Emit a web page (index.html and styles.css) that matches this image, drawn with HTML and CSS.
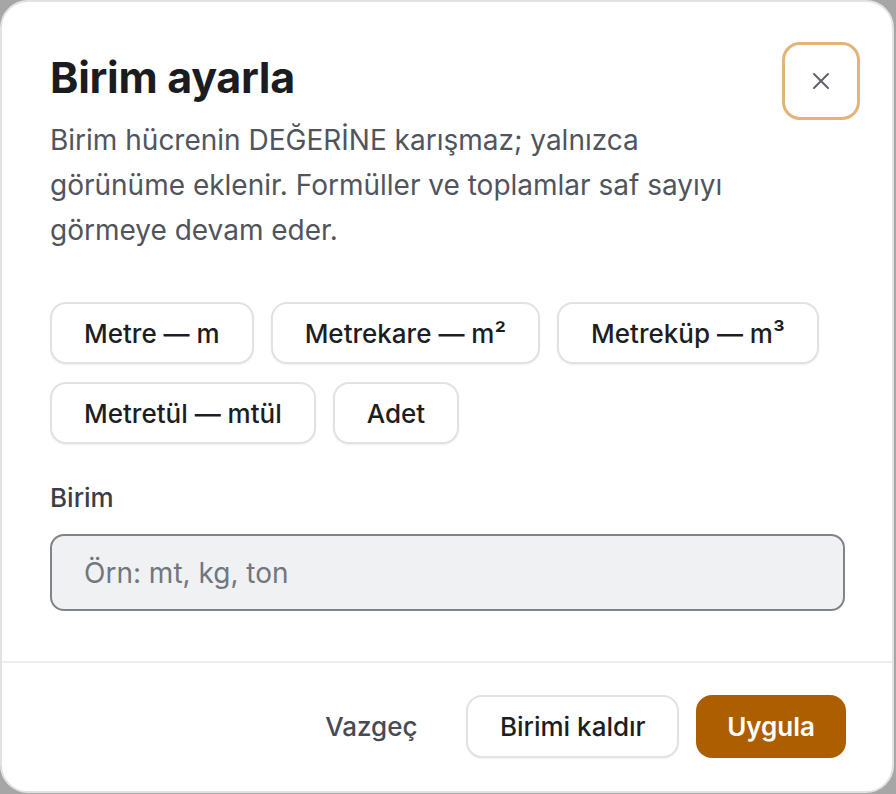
FILE: index.html
```html
<!DOCTYPE html>
<html lang="tr">
<head>
<meta charset="utf-8">
<title>Birim ayarla</title>
<link rel="stylesheet" href="styles.css">
</head>
<body>
<div class="dialog" role="dialog" aria-labelledby="dlg-title">
  <div class="body">
    <div class="header">
      <div class="head-text">
        <h2 id="dlg-title" class="title">Birim ayarla</h2>
        <p class="desc">Birim hücrenin DEĞERİNE karışmaz; yalnızca görünüme eklenir. Formüller ve toplamlar saf sayıyı görmeye devam eder.</p>
      </div>
      <button class="close" aria-label="Kapat">
        <svg width="24" height="24" viewBox="0 0 24 24" fill="none" stroke="currentColor" stroke-width="2" stroke-linecap="round"><path d="M5 5L19 19M19 5L5 19"/></svg>
      </button>
    </div>
    <div class="chips">
      <button class="chip">Metre — m</button>
      <button class="chip">Metrekare — m²</button>
      <button class="chip">Metreküp — m³</button>
      <button class="chip">Metretül — mtül</button>
      <button class="chip">Adet</button>
    </div>
    <label class="label" for="unit">Birim</label>
    <input id="unit" class="input" type="text" placeholder="Örn: mt, kg, ton">
  </div>
  <div class="footer">
    <button class="btn ghost">Vazgeç</button>
    <button class="btn outline">Birimi kaldır</button>
    <button class="btn primary">Uygula</button>
  </div>
</div>
</body>
</html>
```
FILE: styles.css
```css
* { box-sizing: border-box; }
html, body { margin: 0; padding: 0; }
body {
  background: #a6a6a6;
  font-family: Inter, "Noto Sans", sans-serif;
  width: 896px;
  height: 794px;
  overflow: hidden;
}
.dialog {
  width: 894px;
  height: 793px;
  background: #fff;
  border: 2px solid #e2e2e5;
  border-radius: 28px;
  display: flex;
  flex-direction: column;
}
.body {
  padding: 40px 47px 50px 48px;
  display: flex;
  flex-direction: column;
}
.header {
  display: flex;
  align-items: flex-start;
  justify-content: space-between;
}
.title {
  margin: 10px 0 0;
  font-size: 43px;
  line-height: 50px;
  font-weight: 700;
  letter-spacing: -0.3px;
  color: #1b1c20;
}
.desc {
  margin: 16px 0 0;
  max-width: 690px;
  font-size: 28px;
  line-height: 45px;
  color: #50555d;
}
.close {
  width: 78px;
  height: 78px;
  margin: 0 -15px 0 0;
  flex: none;
  border: 3px solid #e3b478;
  border-radius: 18px;
  background: #fff;
  color: #5f636b;
  display: flex;
  align-items: center;
  justify-content: center;
  padding: 0;
}
.chips {
  margin-top: 49px;
  display: flex;
  flex-wrap: wrap;
  gap: 18px 17px;
}
.chip {
  height: 62px;
  padding: 0 32px;
  font-family: inherit;
  font-size: 26px;
  font-weight: 500;
  color: #1d1e22;
  background: #fff;
  border: 2px solid #e2e2e6;
  border-radius: 16px;
  box-shadow: 0 1px 2px rgba(0,0,0,0.06);
}
.label {
  margin-top: 39px;
  font-size: 26px;
  font-weight: 500;
  color: #3b3e45;
  line-height: 30px;
}
.input {
  margin-top: 21px;
  height: 77px;
  width: 100%;
  padding: 0 32px;
  font-family: inherit;
  font-size: 28px;
  color: #1d1e22;
  background: #f0f1f3;
  border: 2px solid #80838a;
  border-radius: 14px;
  outline: none;
}
.input::placeholder { color: #72767e; }
.footer {
  border-top: 2px solid #ededef;
  padding: 32px 46px 0 48px;
  display: flex;
  justify-content: flex-end;
  gap: 17px;
}
.btn {
  height: 63px;
  font-family: inherit;
  font-size: 26px;
  font-weight: 500;
  border-radius: 16px;
  padding: 0 32px;
}
.ghost {
  background: transparent;
  border: none;
  color: #474a52;
  padding: 0 32px;
}
.outline {
  background: #fff;
  border: 2px solid #e2e2e6;
  color: #1d1e22;
  padding: 0 31.5px;
  box-shadow: 0 1px 2px rgba(0,0,0,0.06);
}
.primary {
  background: #ad5f00;
  border: none;
  color: #fff;
  font-weight: 600;
  padding: 0 31px;
}
```
